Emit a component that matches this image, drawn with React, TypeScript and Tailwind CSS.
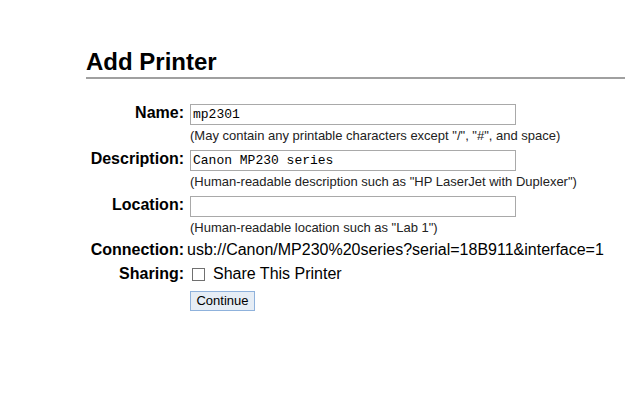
import React from "react";

const sans = { fontFamily: '"Liberation Sans", Arial, sans-serif' };

export default function App() {
  return (
    <div className="w-[625px] h-[408px] bg-white text-black overflow-hidden" style={sans}>
      <div className="pl-[86px] pt-[48px]">
        <h1 className="text-[24px] font-bold leading-[28px] text-black">Add Printer</h1>
        <div className="mt-[1px] h-[2px] bg-[#a0a0a0]" />
        <div className="mt-[25px] grid grid-cols-[98px_1fr] gap-x-[6px] text-[16px]">
          {/* Name */}
          <div className="text-right font-bold leading-[18px]">Name:</div>
          <div>
            <div className="w-[326px] h-[21px] border border-[#a9a9a9] px-[2px] text-[13px] leading-[19px] font-['Liberation_Mono',monospace]">mp2301</div>
            <div className="text-[13px] leading-[15px] mt-[3px] mb-[7px] text-[#222]">(May contain any printable characters except "/", "#", and space)</div>
          </div>
          {/* Description */}
          <div className="text-right font-bold leading-[18px]">Description:</div>
          <div>
            <div className="w-[326px] h-[21px] border border-[#a9a9a9] px-[2px] text-[13px] leading-[19px] font-['Liberation_Mono',monospace]">Canon MP230 series</div>
            <div className="text-[13px] leading-[15px] mt-[3px] mb-[7px] text-[#222]">(Human-readable description such as "HP LaserJet with Duplexer")</div>
          </div>
          {/* Location */}
          <div className="text-right font-bold leading-[18px]">Location:</div>
          <div>
            <div className="w-[326px] h-[21px] border border-[#a9a9a9]" />
            <div className="text-[13px] leading-[15px] mt-[3px] mb-[6px] text-[#222]">(Human-readable location such as "Lab 1")</div>
          </div>
          {/* Connection */}
          <div className="text-right font-bold leading-[18px]">Connection:</div>
          <div className="leading-[18px] -ml-[3px]">usb://Canon/MP230%20series?serial=18B911&amp;interface=1</div>
          {/* Sharing */}
          <div className="text-right font-bold leading-[18px] mt-[6px]">Sharing:</div>
          <div className="flex items-center mt-[6px] leading-[18px]">
            <span className="ml-[2px] w-[13px] h-[13px] border border-[#707070] bg-white" />
            <span className="ml-[8px]">Share This Printer</span>
          </div>
          {/* Continue */}
          <div />
          <div className="mt-[8px]">
            <div className="w-[65px] h-[20px] border border-[#8fb2dc] bg-[#e6edf5] text-[13px] leading-[18px] text-center">Continue</div>
          </div>
        </div>
      </div>
    </div>
  );
}
